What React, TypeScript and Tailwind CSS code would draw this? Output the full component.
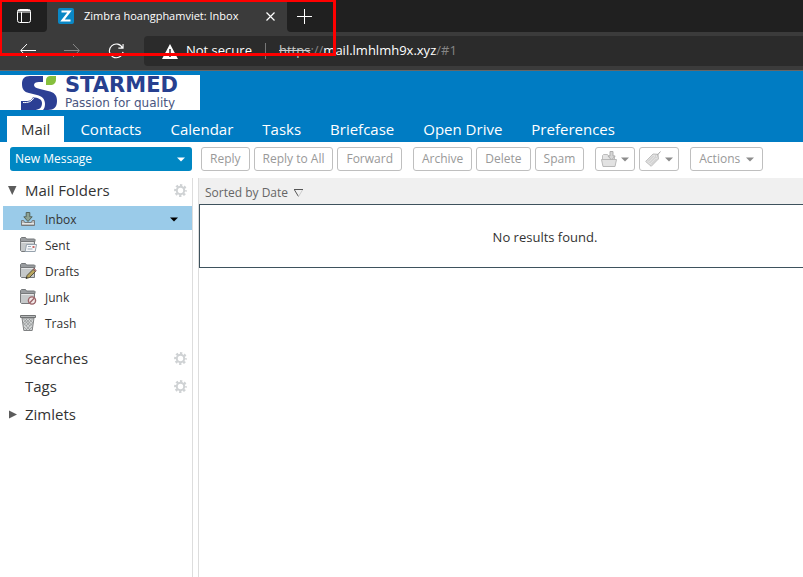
import type { ReactNode } from "react";

const tabs = ["Mail", "Contacts", "Calendar", "Tasks", "Briefcase", "Open Drive", "Preferences"];

function Gear() {
  return (
    <svg width="13" height="13" viewBox="0 0 13 13" fill="none" aria-hidden="true">
      <circle cx="6.5" cy="6.5" r="5.2" stroke="#cfd2d4" strokeWidth="2.4" strokeDasharray="2.3 1.784" strokeDashoffset="1.15" />
      <circle cx="6.5" cy="6.5" r="3.7" stroke="#cfd2d4" strokeWidth="2" />
    </svg>
  );
}

function Caret({ className }: { className: string }) {
  return (
    <svg width="8" height="5" viewBox="0 0 8 5" className={className} aria-hidden="true">
      <path d="M0 0.5h8L4 4.5z" fill="currentColor" />
    </svg>
  );
}

function InboxIcon() {
  return (
    <svg width="16" height="16" viewBox="0 0 16 16" aria-hidden="true">
      <path d="M1.5 9.5h2.2l1 2h6.6l1-2h2.2v5h-13z" fill="#b9bcbd" stroke="#77797a" />
      <path d="M2 12.5h12" stroke="#e6e6e6" />
      <path d="M6.2 1.5h3.6v4.3h2.4L8 10.5 3.8 5.8h2.4z" fill="#8da394" stroke="#56645b" />
    </svg>
  );
}

function FolderBase({ children }: { children: ReactNode }) {
  return (
    <svg width="17" height="16" viewBox="0 0 17 16" aria-hidden="true">
      <path d="M.5 4.5v-3l1-1h4l1 1.5h8l.5.500v2z" fill="#9a9da0" stroke="#75787a" />
      <path d="M.5 4.5h14v10h-13l-1-1z" fill="#c6c9ca" stroke="#77797b" />
      <path d="M1.5 5.5h12" stroke="#e6e7e8" />
      {children}
    </svg>
  );
}

function SentIcon() {
  return (
    <FolderBase>
      <path d="M6.5 7.5h10l-1.3 7h-10z" fill="#f7f8f9" stroke="#96a2ad" />
      <path d="M8 9.5h3M7.5 12h5" stroke="#9aa9b8" />
      <path d="M12.5 9h2v2h-2z" fill="#c56a6a" />
    </FolderBase>
  );
}

function DraftsIcon() {
  return (
    <FolderBase>
      <path d="M6 15.5l1.2-3.2 6-6 2.3 2.2-6 6z" fill="#b9a55e" stroke="#4b4636" strokeWidth=".9" />
      <path d="M13 6.3l1-1 2.3 2.2-1 1z" fill="#d58c8c" stroke="#5c4444" strokeWidth=".6" />
      <path d="M6 15.5l.6-1.6 1 .9z" fill="#222" />
    </FolderBase>
  );
}

function JunkIcon() {
  return (
    <FolderBase>
      <circle cx="12" cy="11.5" r="3.6" fill="#f4e9e9" stroke="#9b6468" strokeWidth="1.4" />
      <path d="M9.6 14l4.8-5" stroke="#9b6468" strokeWidth="1.4" />
    </FolderBase>
  );
}

function TrashIcon() {
  return (
    <svg width="16" height="16" viewBox="0 0 16 16" aria-hidden="true">
      <path d="M2 3h12l-1.8 12.5H3.8z" fill="#d2d4d5" stroke="#808283" />
      <path d="M3.5 4l6.5 7M6 4l6 6.5M9 4l4 4M3.5 8l6.5 7M4 12l3 3M12.5 4L6 11M10 4l-6.500 6M7 4L3 8M12.5 8L6 15M12 12l-3 3" stroke="#8d9091" strokeWidth=".7" />
      <path d="M.5.5h15v2H.5z" fill="#b5b7b8" stroke="#707273" />
    </svg>
  );
}

function MoveIcon() {
  return (
    <svg width="16" height="16" viewBox="0 0 16 16" aria-hidden="true">
      <path d="M1.5 8V4.5l1-1h4l1 1.500h6V8" fill="#e4e4e4" stroke="#bdbdbd" />
      <path d="M.5 8.5h15l-1.500 7H2z" fill="#e2e2e2" stroke="#b8b8b8" />
      <path d="M9 .5h3V5h2.200L10.5 9 7 5h2z" fill="#d6d6d6" stroke="#b0b0b0" />
    </svg>
  );
}

function TagIcon() {
  return (
    <svg width="16" height="16" viewBox="0 0 16 16" aria-hidden="true">
      <path d="M.7 10.5L8 3l5 .3.400 4.700-7.200 7.300z" fill="#e2e2e2" stroke="#bcbcbc" />
      <path d="M3 10.500l5.500-5.500M4.500 12l6-6M6 13.500l5.500-5.500" stroke="#c8c8c8" />
      <path d="M11.500 5L15.500.5" stroke="#a6a6a6" />
      <circle cx="11.500" cy="5" r="1" fill="#fff" stroke="#aaa" strokeWidth=".5" />
    </svg>
  );
}

function ToolButton({ children, label, tight }: { children: ReactNode; label?: string; tight?: boolean }) {
  return (
    <button
      type="button"
      aria-label={label}
      className={`flex h-6 shrink-0 items-center whitespace-nowrap rounded-[3px] border border-[#bfbfbf] bg-white text-xs text-[#999] ${tight ? "gap-1 px-[5px]" : "gap-[6px] px-2"}`}
    >
      {children}
    </button>
  );
}

function Folder({ name, icon, selected }: { name: string; icon: ReactNode; selected?: boolean }) {
  return (
    <li className={`ml-[3px] h-6 ${selected ? "bg-[#9acbe9]" : ""}`}>
      <button type="button" className="flex h-full w-full items-center pl-[17px] pr-[14px] pt-[2px] text-left text-xs">
        <span className="w-[25px]">{icon}</span>
        <span className="grow pt-[2px]">{name}</span>
        {selected && <Caret className="text-black" />}
      </button>
    </li>
  );
}

function Section({ name, mark, gear }: { name: string; mark?: "open" | "closed"; gear?: boolean }) {
  return (
    <div className="flex h-7 items-center pl-2 pr-[5px] text-[15px]">
      <span className="w-[17px] shrink-0">
        {mark && (
          <svg width="9" height="9" viewBox="0 0 9 9" fill="#5c5c5c" aria-hidden="true">
            <path d={mark === "open" ? "M0 0h8.500L4.250 9z" : "M1 0.5v8l8-4z"} />
          </svg>
        )}
      </span>
      <h2 className="grow">{name}</h2>
      {gear && (
        <button type="button" aria-label={`${name} options`}>
          <Gear />
        </button>
      )}
    </div>
  );
}

function Starmed() {
  return (
    <div className="flex h-[35px] w-[200px] items-start bg-white pl-[21px] text-[#27408f]">
      <svg width="36" height="35" viewBox="0 0 36 35" aria-hidden="true">
        <path d="M22 1H9C3 1 1 4 1 9c0 5 2 8 7 9l8 2c5 1 8 4 8 9 0 3-1 5-2 6h5c6 0 9-3 9-9 0-6-3-9-9-10l-8-2c-4-1-6-2-6-4s2-3 5-3h4z" fill="#2c3f94" />
        <path d="M0 26h5c4 0 6-1 7-4 5 1 9 2 9 6 0 5-3 7-8 7H0z" fill="#2c3f94" />
        <path d="M2 27.500c5 .5 9-1 11-5" fill="none" stroke="#fff" strokeWidth="1" />
        <path d="M25 10V6c0-4 2-5 5-5h5v3c0 4-2 6-6 6z" fill="#86bf3d" />
      </svg>
      <div className="ml-2 whitespace-nowrap font-['DejaVu_Sans']">
        <p className="text-[21px] font-bold leading-[20px]">STARMED</p>
        <p className="text-xs leading-[17px] text-[#4a5680]">Passion for quality</p>
      </div>
    </div>
  );
}

export default function App() {
  return (
    <div className="relative flex min-h-screen flex-col overflow-hidden bg-white font-['Open_Sans','Noto_Sans',sans-serif] text-[#333]">
      <header className="bg-[#3b3b3b] text-white">
        <div className="flex h-8">
          <button type="button" aria-label="Tab actions" className="flex w-[47px] items-center rounded-br bg-[#202020] pl-[17px]">
            <svg width="14" height="14" viewBox="0 0 14 14" fill="none" stroke="#fff" aria-hidden="true">
              <rect x=".5" y=".5" width="13" height="13" rx="2" />
              <path d="M1 1.500h12M1 3h12M4.500 3v10.500" />
            </svg>
          </button>
          <div className="flex w-60 items-center pl-[11px] pr-3 text-[11px]">
            <svg width="16" height="16" viewBox="0 0 16 16" aria-hidden="true">
              <rect width="16" height="16" rx="2" fill="#0a87c5" />
              <path d="M3.500 3.500h8l-7 9h8" fill="none" stroke="#fff" strokeWidth="2.200" />
            </svg>
            <span className="ml-[10px] grow whitespace-nowrap">Zimbra hoangphamviet: Inbox</span>
            <button type="button" aria-label="Close tab">
              <svg width="9" height="9" viewBox="0 0 9 9" stroke="#fff" strokeWidth="1.200" aria-hidden="true">
                <path d="M.5.5l8 8M8.5.5l-8 8" />
              </svg>
            </button>
          </div>
          <div className="flex grow items-center rounded-bl bg-[#202020] pl-[10px]">
            <button type="button" aria-label="New tab">
              <svg width="15" height="15" viewBox="0 0 15 15" stroke="#fff" aria-hidden="true">
                <path d="M0 7.500h15M7.500 0v15" />
              </svg>
            </button>
          </div>
        </div>
        <div className="flex h-[39px] items-start border-b border-[#666] pl-5 pt-1">
          <div className="flex h-[30px] w-[124px] items-center gap-7">
            <button type="button" aria-label="Back">
              <svg width="16" height="14" viewBox="0 0 16 14" fill="none" stroke="#fff" aria-hidden="true">
                <path d="M16 6.500H1M7 0L.7 6.500 7 13" />
              </svg>
            </button>
            <button type="button" aria-label="Forward">
              <svg width="16" height="14" viewBox="0 0 16 14" fill="none" stroke="#888" aria-hidden="true">
                <path d="M0 6.500h15M9 0l6.300 6.500L9 13" />
              </svg>
            </button>
            <button type="button" aria-label="Reload">
              <svg width="16" height="16" viewBox="0 0 17 16" fill="none" stroke="#fff" strokeWidth="1.200" aria-hidden="true">
                <path d="M15.500 5A7.300 7.300 0 1 0 16 9M16 .5V5h-5" />
              </svg>
            </button>
          </div>
          <div className="flex h-[30px] grow items-center rounded-l bg-[#2b2b2b] pl-[18px] text-[13px]">
            <svg width="16" height="15" viewBox="0 0 16 15" aria-hidden="true">
              <path d="M8 0l8 15H0z" fill="#fff" />
              <path d="M8 5v5M8 11.500V13" stroke="#2b2b2b" strokeWidth="1.500" />
            </svg>
            <span className="ml-2 w-[79px] whitespace-nowrap">Not secure</span>
            <span className="mr-[13px] h-4 w-px bg-[#777]" />
            <span className="whitespace-nowrap text-[#858585]">
              <s className="text-[#ccc]">https</s>://<span className="text-white">mail.lmhlmh9x.xyz</span>/#1
            </span>
          </div>
        </div>
      </header>

      <div className="bg-[#007cc3] pt-1">
        <Starmed />
        <nav className="mt-[6px] flex h-[26px] pl-[7px] text-[15px]">
          {tabs.map((tab, i) => (
            <a
              key={tab}
              href="#1"
              className={`flex items-center whitespace-nowrap pr-[14px] ${i === 0 ? "mr-px bg-white pl-[14px]" : "pl-[15px] text-white"}`}
            >
              {tab}
            </a>
          ))}
        </nav>
      </div>

      <div className="flex h-9 pt-[5px]">
        <div className="w-[201px] shrink-0 pl-[10px] pr-[9px]">
          <button type="button" className="flex h-6 w-full items-center justify-between rounded-[3px] bg-[#0087c3] pl-[5px] pr-[7px] text-xs text-white">
            New Message
            <Caret className="text-white" />
          </button>
        </div>
        <div className="flex gap-[11px]">
          <div className="flex gap-1">
            <ToolButton>Reply</ToolButton>
            <ToolButton>Reply to All</ToolButton>
            <ToolButton>Forward</ToolButton>
          </div>
          <div className="flex gap-1">
            <ToolButton>Archive</ToolButton>
            <ToolButton>Delete</ToolButton>
            <ToolButton>Spam</ToolButton>
          </div>
          <div className="flex gap-1">
            <ToolButton label="Move" tight><MoveIcon /><Caret className="text-[#8c8c8c]" /></ToolButton>
            <ToolButton label="Tag" tight><TagIcon /><Caret className="text-[#8c8c8c]" /></ToolButton>
          </div>
          <ToolButton>Actions<Caret className="text-[#8c8c8c]" /></ToolButton>
        </div>
      </div>

      <div className="flex grow">
        <aside className="w-[193px] shrink-0 border-r border-[#ddd]">
          <div className="-mt-[2px]"><Section name="Mail Folders" mark="open" gear /></div>
          <ul className="mt-[2px] flex flex-col gap-[2px]">
            <Folder name="Inbox" icon={<InboxIcon />} selected />
            <Folder name="Sent" icon={<SentIcon />} />
            <Folder name="Drafts" icon={<DraftsIcon />} />
            <Folder name="Junk" icon={<JunkIcon />} />
            <Folder name="Trash" icon={<TrashIcon />} />
          </ul>
          <div className="mt-[10px]">
            <Section name="Searches" gear />
            <Section name="Tags" gear />
            <Section name="Zimlets" mark="closed" />
          </div>
        </aside>
        <main className="ml-[5px] grow border-l border-[#ddd]">
          <button type="button" className="flex h-[26px] w-full items-center gap-[6px] bg-[#f0f0f0] pl-[6px] pt-1 text-xs text-[#666]">
            Sorted by Date
            <svg width="9" height="8" viewBox="0 0 9 8" fill="none" aria-hidden="true">
              <path d="M0 .5h9M.5 1l4 6.500" stroke="#555" />
              <path d="M4.500 7.500l4-6.500" stroke="#ccc" />
            </svg>
          </button>
          <p className="flex h-16 items-center justify-center border-y border-l border-[#3e525d] pl-[87px] pt-[3px] text-[13px]">No results found.</p>
        </main>
      </div>

      <div className="pointer-events-none absolute left-0 top-0 h-14 w-[336px] border-[3px] border-l-2 border-t-2 border-[#f00]" />
    </div>
  );
}
